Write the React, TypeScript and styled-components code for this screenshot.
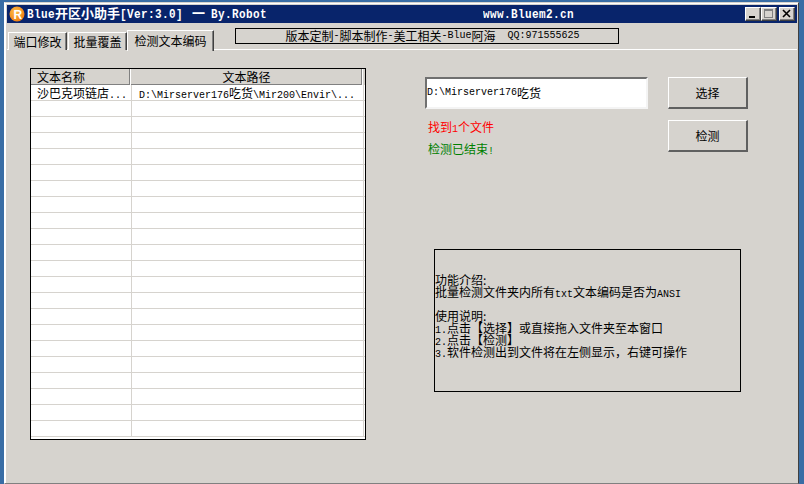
import React from "react";
import styled, { createGlobalStyle } from "styled-components";

const GlobalStyle = createGlobalStyle`
  html, body {
    margin: 0;
    width: 804px;
    height: 484px;
    overflow: hidden;
    background: #396da5;
  }
  * { box-sizing: border-box; }
`;

const FONT = `"Noto Sans CJK SC", "Liberation Sans", sans-serif`;
const FACE = "#d6d3ce";

const Desktop = styled.div`
  width: 804px;
  height: 484px;
  padding: 2px 5px 0 4px;
`;

const Window = styled.div`
  width: 795px;
  height: 482px;
  display: flex;
  flex-direction: column;
  background: ${FACE};
  border-top: 1px solid ${FACE};
  border-left: 1px solid #ffffff;
  border-right: 1px solid #404040;
  border-bottom: 1px solid #808080;
  box-shadow: inset 1px 1px 0 #ffffff;
  padding: 2px 1px 0 2px;
  font-family: ${FONT};
  font-size: 12px;
  line-height: 12px;
  color: #000;
`;

// the latin part of the old bitmap font is narrow and tall, so stretch it a bit
const Latin = styled.span`
  display: inline-block;
  font-family: "Liberation Mono", monospace;
  font-size: 10px;
  line-height: 12px;
  transform: scaleY(1.18);
  transform-origin: 50% 75%;
  white-space: pre;
`;

const TitleBar = styled.div`
  height: 18px;
  flex: none;
  display: flex;
  align-items: center;
  background: #08246b;
  padding: 0 2px 0 2px;
`;

const AppIcon = styled.svg`
  width: 16px;
  height: 16px;
  flex: none;
`;

const TitleText = styled.div`
  margin-left: 2px;
  width: 456px;
  flex: none;
  color: #fff;
  font-weight: 700;
  font-size: 13px;
  white-space: pre;
  ${Latin} {
    font-size: 11px;
    letter-spacing: 0.4px;
    font-weight: 700;
  }
`;

const SiteText = styled(TitleText)`
  margin-left: 0;
  width: auto;
  flex: 1;
`;

const TitleDash = styled.span`
  margin: 0 6px 0 2px;
`;

const CaptionButton = styled.div<{ $gap?: number }>`
  width: 16px;
  height: 14px;
  flex: none;
  margin-left: ${({ $gap }) => $gap ?? 0}px;
  background: ${FACE};
  border-top: 1px solid #fff;
  border-left: 1px solid #fff;
  border-right: 1px solid #404040;
  border-bottom: 1px solid #404040;
  box-shadow: inset -1px -1px 0 #808080;
  display: flex;
  align-items: center;
  justify-content: center;
`;

const CaptionGlyph = styled.svg`
  width: 14px;
  height: 12px;
  display: block;
`;

const TabRow = styled.div`
  height: 27px;
  flex: none;
  display: flex;
  align-items: flex-start;
  padding-left: 1px;
  border-bottom: 1px solid #fff;
`;

const Tabs = styled.div`
  height: 27px;
  display: flex;
  align-items: flex-end;
`;

const Tab = styled.div<{ $active?: boolean; $width: number; $gap: number }>`
  width: ${({ $width }) => $width}px;
  height: ${({ $active }) => ($active ? 21 : 18)}px;
  margin-bottom: ${({ $active }) => ($active ? -1 : 0)}px;
  margin-right: ${({ $gap }) => $gap}px;
  background: ${FACE};
  border-top: 1px solid #fff;
  border-left: 1px solid #fff;
  border-right: 1px solid #404040;
  box-shadow: inset -1px 0 0 #808080;
  display: flex;
  align-items: center;
  justify-content: center;
  white-space: nowrap;
  position: relative;
`;

const Banner = styled.div`
  width: 384px;
  height: 16px;
  margin: 5px 0 0 21px;
  border: 1px solid #000;
  display: flex;
  align-items: center;
  justify-content: center;
  padding-left: 11px;
  white-space: pre;
`;

const Content = styled.div`
  display: flex;
  align-items: flex-start;
  padding: 18px 0 0 23px;
`;

const Table = styled.div`
  width: 336px;
  height: 372px;
  flex: none;
  border: 1px solid #000;
  background: #fff;
  overflow: hidden;
`;

const HeaderRow = styled.div`
  height: 16px;
  display: flex;
  background: ${FACE};
`;

const HeaderCell = styled.div<{ $width: number; $center?: boolean }>`
  width: ${({ $width }) => $width}px;
  flex: none;
  height: 16px;
  padding-left: ${({ $center }) => ($center ? 0 : 6)}px;
  text-align: ${({ $center }) => ($center ? "center" : "left")};
  line-height: 15px;
  border-right: 1px solid #fff;
  box-shadow: inset -1px -1px 0 #808080;
`;

const Row = styled.div`
  height: 16px;
  display: flex;
  border-bottom: 1px solid ${FACE};
`;

const Cell = styled.div<{ $width: number; $inset: number }>`
  width: ${({ $width }) => $width}px;
  flex: none;
  height: 15px;
  padding-left: ${({ $inset }) => $inset}px;
  line-height: 15px;
  border-right: 1px solid ${FACE};
  white-space: pre;
  overflow: hidden;
`;

const Side = styled.div`
  margin-left: 59px;
  padding-top: 9px;
  display: flex;
  flex-direction: column;
`;

const Controls = styled.div`
  display: flex;
  align-items: flex-start;
`;

const PathColumn = styled.div`
  width: 223px;
  flex: none;
  display: flex;
  flex-direction: column;
`;

const PathInput = styled.div`
  height: 32px;
  background: #fff;
  border-top: 2px solid #707070;
  border-left: 2px solid #707070;
  border-right: 2px solid #f4f4f4;
  border-bottom: 2px solid #f4f4f4;
  display: flex;
  align-items: center;
  white-space: pre;
`;

const Status = styled.div<{ $color: string; $top: number }>`
  height: 12px;
  color: ${({ $color }) => $color};
  margin: ${({ $top }) => $top}px 0 0 3px;
  white-space: pre;
`;

const ButtonColumn = styled.div`
  margin-left: 20px;
  display: flex;
  flex-direction: column;
  gap: 11px;
`;

const ActionButton = styled.div`
  width: 80px;
  height: 32px;
  background: ${FACE};
  border-top: 1px solid #fff;
  border-left: 1px solid #fff;
  border-right: 2px solid #606060;
  border-bottom: 2px solid #606060;
  display: flex;
  align-items: center;
  justify-content: center;
`;

const InfoBox = styled.div`
  width: 307px;
  height: 143px;
  margin: 94px 0 0 9px;
  padding-bottom: 10px;
  border: 1px solid #000;
  display: flex;
  flex-direction: column;
  justify-content: center;
  white-space: pre;
`;

const InfoLine = styled.div`
  height: 12px;
  line-height: 12px;
`;

const rows = Array.from({ length: 22 }, (_, index) => index);

export default function App() {
  return (
    <>
      <GlobalStyle />
      <Desktop>
        <Window>
          <TitleBar>
            <AppIcon viewBox="0 0 16 16">
              <defs>
                <radialGradient id="logo" cx="0.4" cy="0.35" r="0.7">
                  <stop offset="0" stopColor="#ffc04a" />
                  <stop offset="1" stopColor="#ee7a10" />
                </radialGradient>
              </defs>
              <circle cx="8" cy="8" r="7.5" fill="url(#logo)" />
              <text x="4.5" y="12.5" fontSize="12" fontWeight="700" fontFamily="Liberation Sans" fill="#fff">
                R
              </text>
            </AppIcon>
            <TitleText>
              <Latin>Blue</Latin>开区小助手<Latin>[Ver:3.0] </Latin>
              <TitleDash>一</TitleDash>
              <Latin>By.Robot</Latin>
            </TitleText>
            <SiteText>
              <Latin>www.Bluem2.cn</Latin>
            </SiteText>
            <CaptionButton>
              <CaptionGlyph viewBox="0 0 14 12">
                <rect x="3" y="8" width="6" height="2" fill="#000" />
              </CaptionGlyph>
            </CaptionButton>
            <CaptionButton>
              <CaptionGlyph viewBox="0 0 14 12">
                <rect x="2.5" y="1.5" width="8" height="8" fill="none" stroke="#808080" />
                <rect x="3" y="2" width="7" height="1" fill="#808080" />
              </CaptionGlyph>
            </CaptionButton>
            <CaptionButton $gap={2}>
              <CaptionGlyph viewBox="0 0 14 12">
                <path d="M3 2 L10 9 M10 2 L3 9" stroke="#000" strokeWidth="1.6" fill="none" />
              </CaptionGlyph>
            </CaptionButton>
          </TitleBar>
          <TabRow>
            <Tabs>
              <Tab $width={59} $gap={1}>
                端口修改
              </Tab>
              <Tab $width={59} $gap={0}>
                批量覆盖
              </Tab>
              <Tab $width={87} $gap={0} $active>
                检测文本编码
              </Tab>
            </Tabs>
            <Banner>
              版本定制<Latin>-</Latin>脚本制作<Latin>-</Latin>美工相关<Latin>-Blue</Latin>阿海<Latin>  QQ:971555625</Latin>
            </Banner>
          </TabRow>
          <Content>
            <Table>
              <HeaderRow>
                <HeaderCell $width={100}>文本名称</HeaderCell>
                <HeaderCell $width={232} $center>
                  文本路径
                </HeaderCell>
              </HeaderRow>
              {rows.map((index) => (
                <Row key={index}>
                  <Cell $width={101} $inset={6}>
                    {index === 0 && (
                      <>
                        沙巴克项链店<Latin>...</Latin>
                      </>
                    )}
                  </Cell>
                  <Cell $width={232} $inset={7}>
                    {index === 0 && (
                      <>
                        <Latin>D:\Mirserver176</Latin>吃货<Latin>\Mir200\Envir\...</Latin>
                      </>
                    )}
                  </Cell>
                </Row>
              ))}
            </Table>
            <Side>
              <Controls>
                <PathColumn>
                  <PathInput>
                    <Latin>D:\Mirserver176</Latin>吃货
                  </PathInput>
                  <Status $color="#ff0000" $top={12}>
                    找到<Latin>1</Latin>个文件
                  </Status>
                  <Status $color="#008000" $top={10}>
                    检测已结束<Latin>!</Latin>
                  </Status>
                </PathColumn>
                <ButtonColumn>
                  <ActionButton>选择</ActionButton>
                  <ActionButton>检测</ActionButton>
                </ButtonColumn>
              </Controls>
              <InfoBox>
                <InfoLine>功能介绍:</InfoLine>
                <InfoLine>
                  批量检测文件夹内所有<Latin>txt</Latin>文本编码是否为<Latin>ANSI</Latin>
                </InfoLine>
                <InfoLine />
                <InfoLine>使用说明:</InfoLine>
                <InfoLine>
                  <Latin>1.</Latin>点击【选择】或直接拖入文件夹至本窗口
                </InfoLine>
                <InfoLine>
                  <Latin>2.</Latin>点击【检测】
                </InfoLine>
                <InfoLine>
                  <Latin>3.</Latin>软件检测出到文件将在左侧显示，右键可操作
                </InfoLine>
              </InfoBox>
            </Side>
          </Content>
        </Window>
      </Desktop>
    </>
  );
}
